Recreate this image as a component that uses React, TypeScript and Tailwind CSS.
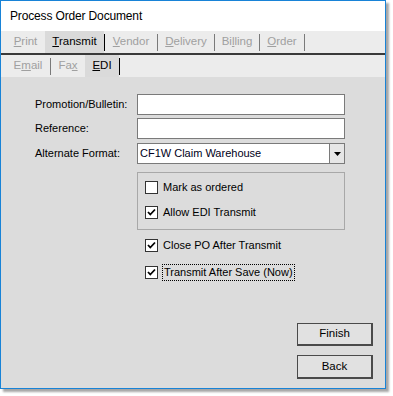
import React from "react";

const font = { fontFamily: '"Liberation Sans", Arial, sans-serif' };

function Check({ checked }: { checked: boolean }) {
  return (
    <div className="w-[13px] h-[13px] border border-[#333333] bg-white flex items-center justify-center shrink-0">
      {checked && (
        <svg width="9" height="9" viewBox="0 0 9 9">
          <path d="M1 4 L3.3 6.5 L8 1.5" stroke="#000" strokeWidth="1.8" fill="none" />
        </svg>
      )}
    </div>
  );
}

function Tab({
  children,
  w,
  selected,
  sep,
}: {
  children: React.ReactNode;
  w: string;
  selected?: boolean;
  sep?: "dark" | "gray" | "none";
}) {
  return (
    <div className="flex h-full items-stretch">
      <div
        className={`${w} flex items-center justify-center ${
          selected ? "bg-[#dadada] text-black" : "text-[#a0a0a0]"
        }`}
      >
        {children}
      </div>
      {sep !== "none" && (
        <div className="flex items-center">
          <div className={`w-px h-[17px] ${sep === "dark" ? "bg-black" : "bg-[#7a7a7a]"}`} />
        </div>
      )}
    </div>
  );
}

export default function App() {
  return (
    <div className="w-[393px] h-[396px] bg-white" style={font}>
      <div className="w-[386px] h-[389px] border border-[#1883d7] shadow-[3px_3px_2px_rgba(0,0,0,0.35)] flex flex-col bg-[#dcdcdc]">
        {/* title */}
        <div className="h-[30px] bg-white flex items-center pl-[9px] text-[12px] text-black tracking-[-0.15px]">
          Process Order Document
        </div>
        {/* tab row 1 */}
        <div className="h-[22px] bg-[#ececec] flex items-stretch pl-[5px] text-[11.5px]">
          <Tab w="w-[39px]" sep="none">
            <span><u>P</u>rint</span>
          </Tab>
          <Tab w="w-[59px]" selected sep="dark">
            <span><u>T</u>ransmit</span>
          </Tab>
          <Tab w="w-[52px]" sep="gray">
            <span><u>V</u>endor</span>
          </Tab>
          <Tab w="w-[56px]" sep="gray">
            <span><u>D</u>elivery</span>
          </Tab>
          <Tab w="w-[44px]" sep="gray">
            <span>Bi<u>l</u>ling</span>
          </Tab>
          <Tab w="w-[44px]" sep="gray">
            <span><u>O</u>rder</span>
          </Tab>
        </div>
        <div className="h-[2px] bg-[#3a3a3a]" />
        {/* tab row 2 */}
        <div className="h-[22px] bg-[#ececec] flex items-stretch pl-[5px] text-[11.5px]">
          <Tab w="w-[44px]" sep="gray">
            <span>E<u>m</u>ail</span>
          </Tab>
          <Tab w="w-[34px]" sep="none">
            <span>Fa<u>x</u></span>
          </Tab>
          <Tab w="w-[34px]" selected sep="dark">
            <span><u>E</u>DI</span>
          </Tab>
        </div>
        {/* content */}
        <div className="flex-1 flex flex-col pl-[34px] pt-[17px] pb-[9px] text-[11px] text-black">
          <div className="flex items-center h-[21px]">
            <div className="w-[102px]">Promotion/Bulletin:</div>
            <div className="w-[208px] h-[21px] bg-white border border-[#7a7a7a]" />
          </div>
          <div className="flex items-center h-[21px] mt-[3px]">
            <div className="w-[102px]">Reference:</div>
            <div className="w-[208px] h-[21px] bg-white border border-[#7a7a7a]" />
          </div>
          <div className="flex items-center h-[21px] mt-[4px]">
            <div className="w-[102px]">Alternate Format:</div>
            <div className="w-[208px] h-[21px] bg-white border border-[#7a7a7a] flex items-stretch">
              <div className="flex-1 flex items-center pl-[2px] text-[#000020]">CF1W Claim Warehouse</div>
              <div className="w-[15px] border-l border-[#7a7a7a] bg-[#e6e6e6] flex items-center justify-center">
                <svg width="7" height="4" viewBox="0 0 7 4">
                  <path d="M0 0 H7 L3.5 4 Z" fill="#000" />
                </svg>
              </div>
            </div>
          </div>
          {/* group box */}
          <div className="ml-[102px] mt-[8px] w-[208px] h-[58px] border border-[#a8a8a8] flex flex-col pl-[7px] pt-[8px]">
            <div className="flex items-center h-[13px] gap-[5px]">
              <Check checked={false} />
              <span>Mark as ordered</span>
            </div>
            <div className="flex items-center h-[13px] gap-[5px] mt-[12px]">
              <Check checked />
              <span>Allow EDI Transmit</span>
            </div>
          </div>
          <div className="ml-[110px] mt-[9px] flex items-center h-[13px] gap-[5px]">
            <Check checked />
            <span>Close PO After Transmit</span>
          </div>
          <div className="ml-[110px] mt-[14px] flex items-center h-[13px] gap-[4px]">
            <Check checked />
            <span className="border border-dotted border-black px-px leading-[15px]">
              Transmit After Save (Now)
            </span>
          </div>
          {/* buttons */}
          <div className="mt-auto flex flex-col items-end pr-[12px] gap-[9px]">
            <div className="w-[76px] h-[23px] bg-[#e1e1e1] border border-[#4a4a4a] border-r-2 border-b-2 flex items-center justify-center text-[11.5px]">
              Finish
            </div>
            <div className="w-[76px] h-[24px] bg-[#e1e1e1] border border-[#4a4a4a] border-r-2 border-b-2 flex items-center justify-center text-[11.5px]">
              Back
            </div>
          </div>
        </div>
      </div>
    </div>
  );
}
